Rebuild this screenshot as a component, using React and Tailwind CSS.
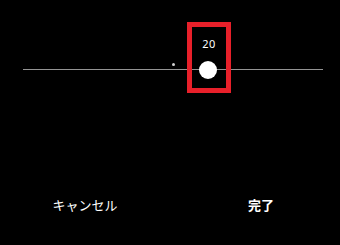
import React from "react";

export default function App() {
  return (
    <div className="w-[340px] h-[245px] bg-black flex flex-col" style={{ fontFamily: '"Noto Sans", "Noto Sans CJK JP", sans-serif' }}>
      <div className="relative h-[180px]">
        <div className="absolute left-[23px] top-[69px] w-[300px] h-px bg-[#949494]" />
        <div className="absolute left-[172px] top-[63px] w-[3px] h-[3px] rounded-full bg-[#d0d0d0]" />
        <div className="absolute left-[199px] top-[61px] w-[18px] h-[18px] rounded-full bg-white" />
        <div className="absolute left-[187px] top-[22px] w-[44px] h-[71px] border-[5px] border-[#e8202a] flex justify-center">
          <span className="text-white text-[11px] leading-none mt-[11px] tracking-[0.5px]">20</span>
        </div>
      </div>
      <div className="grid grid-cols-2 mt-[19px]">
        <div className="flex justify-center text-white text-[13px] leading-none">キャンセル</div>
        <div className="flex justify-center pl-[12px] text-white text-[13px] font-bold leading-none">完了</div>
      </div>
    </div>
  );
}
